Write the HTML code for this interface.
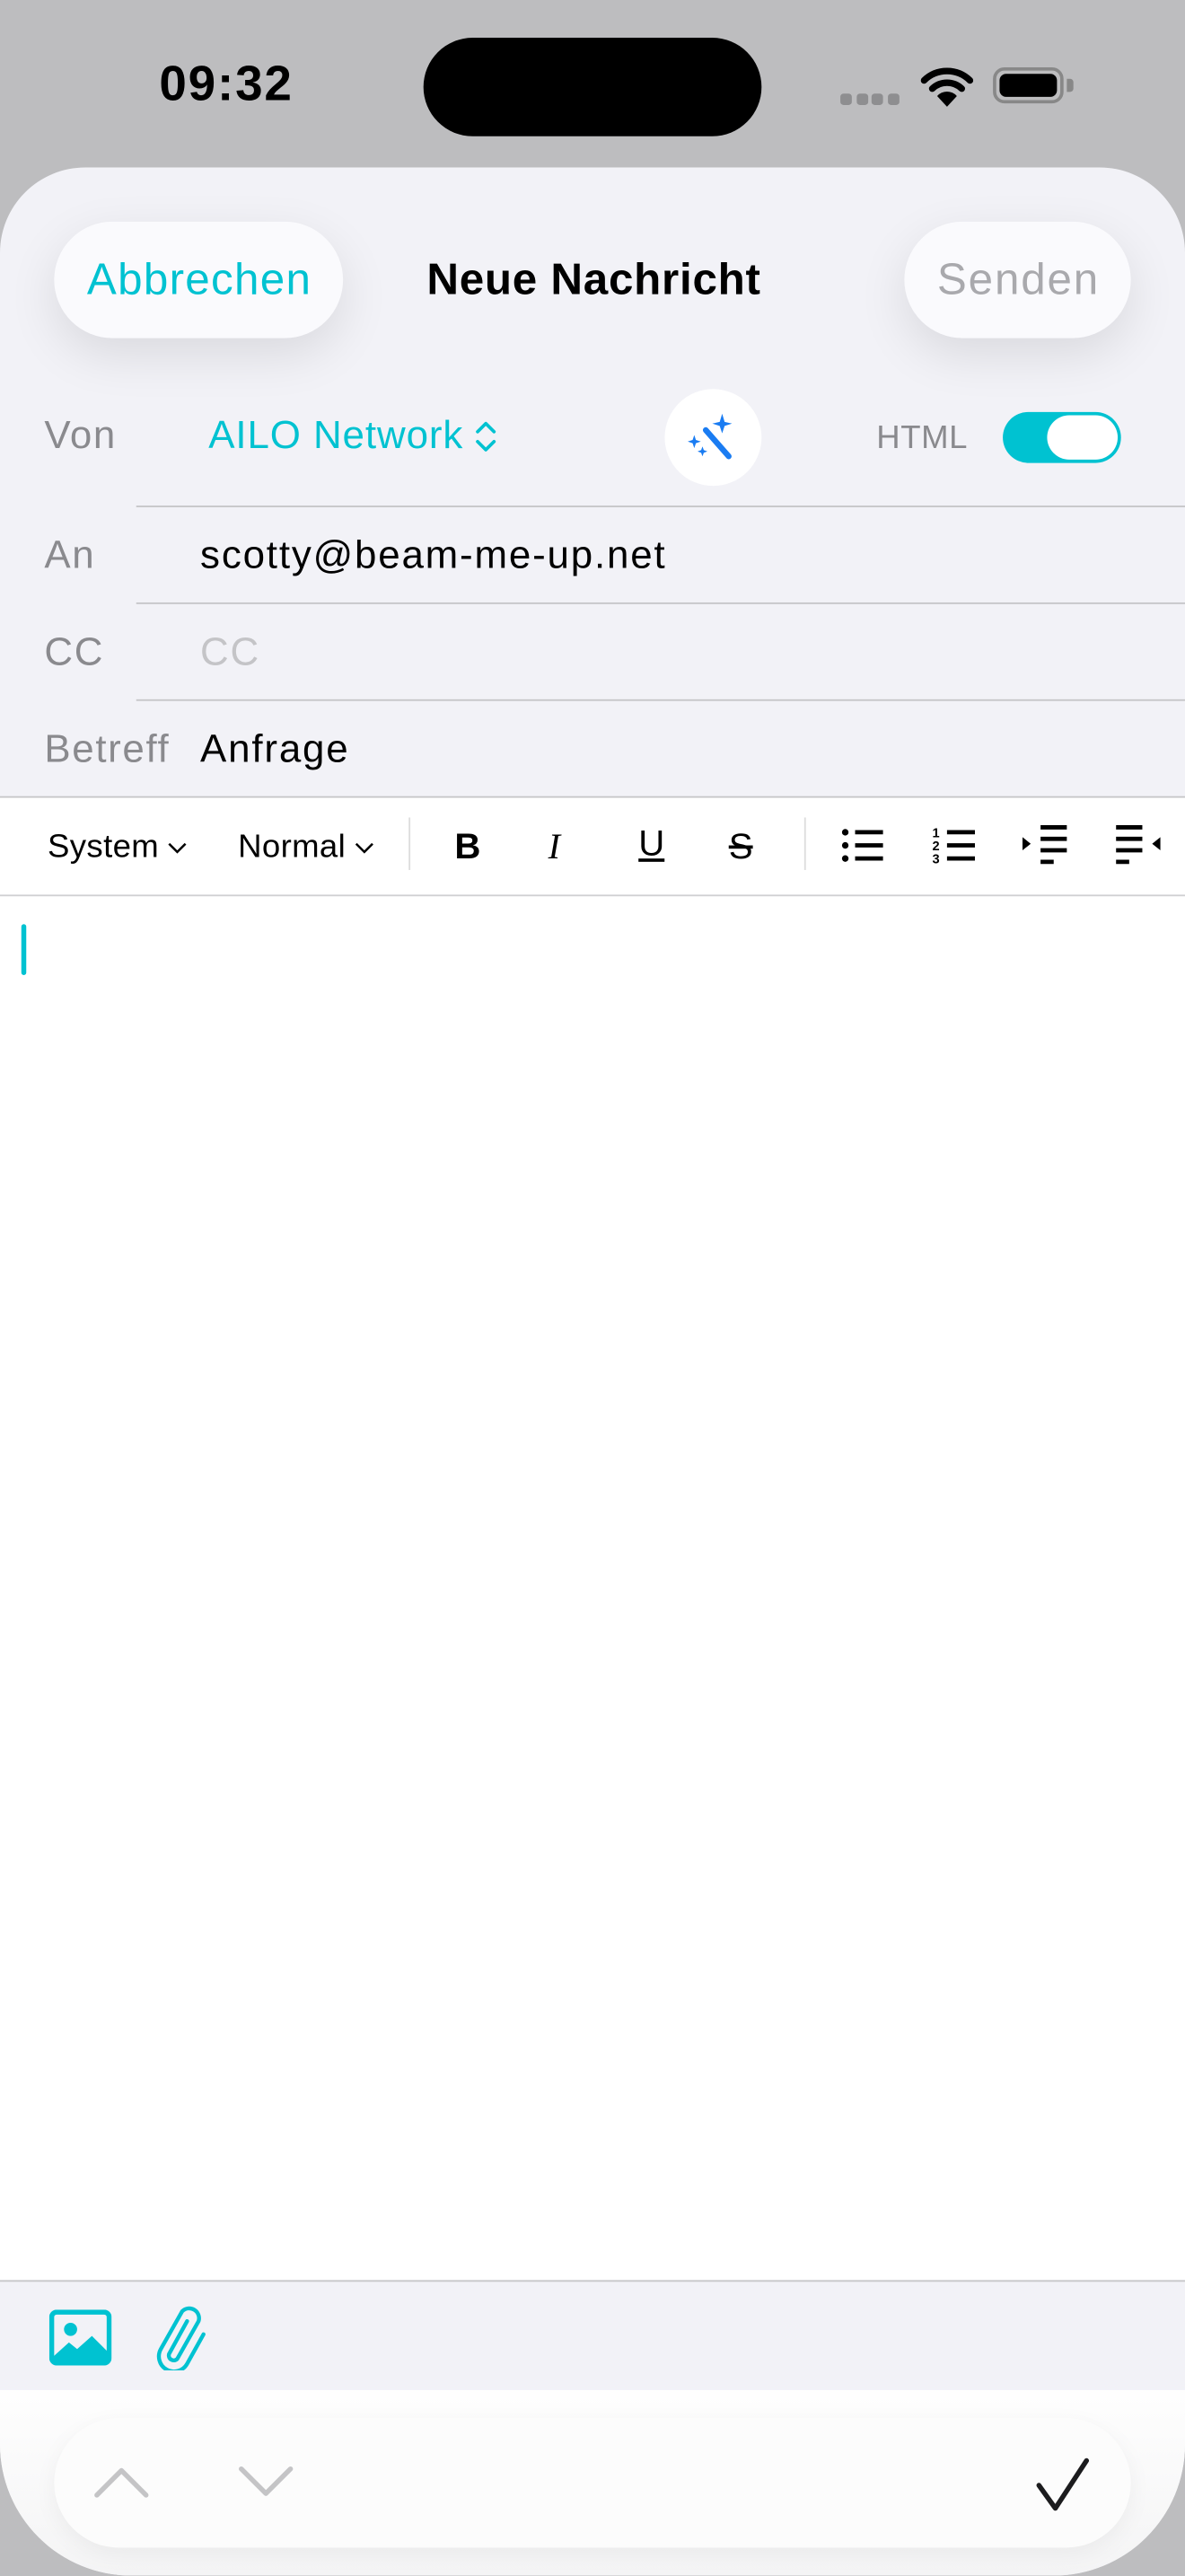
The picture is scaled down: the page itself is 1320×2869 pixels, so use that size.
<!DOCTYPE html>
<html><head><meta charset="utf-8">
<style>
html,body{margin:0;padding:0;width:1320px;height:2868px;overflow:hidden;background:#bdbdbf;}
#w{position:absolute;left:0;top:0;width:722px;height:1569px;transform:scale(1.82825);transform-origin:0 0;font-family:"Liberation Sans",sans-serif;}
.a{position:absolute;}
.t{position:absolute;white-space:nowrap;line-height:1;}
.sheet{left:0;top:102px;width:722px;height:1467px;background:#f2f2f7;border-radius:52px 52px 80px 80px;overflow:hidden;}
.pill{background:#fafafd;border-radius:36px;box-shadow:0 10px 30px rgba(0,0,0,0.10);}
.lab{color:#8a8a8e;font-size:24px;letter-spacing:0.9px;}
.val{font-size:24px;letter-spacing:1px;}
.hd{font-size:27px;letter-spacing:0.7px;}
.sep{height:1px;background:#c6c6c8;}
.tb{font-size:20px;color:#000;letter-spacing:0.2px;}
</style></head><body>
<div id="w">
<div class="t" style="left:97px;top:37px;font-size:30px;font-weight:bold;color:#000;letter-spacing:1px;">09:32</div>
<div class="a" style="left:258px;top:23px;width:206px;height:60px;background:#000;border-radius:30px;"></div>
<div class="a" style="left:512px;top:57px;width:36px;height:7px;">
 <div class="a" style="left:0;top:0;width:7px;height:7px;border-radius:2px;background:#8e8e90"></div>
 <div class="a" style="left:10px;top:0;width:7px;height:7px;border-radius:2px;background:#8e8e90"></div>
 <div class="a" style="left:19px;top:0;width:7px;height:7px;border-radius:2px;background:#8e8e90"></div>
 <div class="a" style="left:29px;top:0;width:7px;height:7px;border-radius:2px;background:#8e8e90"></div>
</div>
<svg class="a" style="left:561px;top:40px" width="32" height="26" viewBox="0 0 32 26">
 <path d="M2 9 A20 20 0 0 1 30 9" stroke="#000" stroke-width="4" fill="none" stroke-linecap="round"/>
 <path d="M7 14 A13 13 0 0 1 25 14" stroke="#000" stroke-width="4" fill="none" stroke-linecap="round"/>
 <path d="M16 25 L10 18.5 A8 8 0 0 1 22 18.5 Z" fill="#000"/>
</svg>
<div class="a" style="left:605px;top:41px;width:43px;height:22px;border:2px solid #888;border-radius:7px;box-sizing:border-box;"></div>
<div class="a" style="left:609px;top:45px;width:35px;height:14px;background:#000;border-radius:4px;"></div>
<div class="a" style="left:650px;top:48px;width:4px;height:8px;background:#888;border-radius:0 2px 2px 0;"></div>

<div class="a sheet">
 <div class="a pill" style="left:33px;top:33px;width:176px;height:71px;"></div>
 <div class="t hd" style="left:53px;top:55px;color:#00c2d1;">Abbrechen</div>
 <div class="t hd" style="left:260px;top:55px;font-weight:bold;color:#000;letter-spacing:0.4px;">Neue Nachricht</div>
 <div class="a pill" style="left:551px;top:33px;width:138px;height:71px;"></div>
 <div class="t hd" style="left:571px;top:55px;color:#a9a9ad;letter-spacing:1px;">Senden</div>

 <div class="t lab" style="left:27px;top:152px;">Von</div>
 <div class="t val" style="left:127px;top:152px;color:#00c2d1;letter-spacing:0.5px;">AILO Network</div>
 <svg class="a" style="left:289px;top:153px" width="14" height="22" viewBox="0 0 14 22"><path d="M2 8 L7 3 L12 8 M2 14 L7 19 L12 14" stroke="#00c2d1" stroke-width="2" fill="none" stroke-linecap="round" stroke-linejoin="round"/></svg>
 <div class="a" style="left:405px;top:135px;width:59px;height:59px;border-radius:50%;background:#fff;"></div>
 <svg class="a" style="left:418px;top:148px" width="32" height="32" viewBox="0 0 32 32">
  <path d="M12 12 L26 28" stroke="#1a7cf2" stroke-width="3.5" stroke-linecap="round"/>
  <path d="M22 2 L23.5 7 L28 8 L23.5 9.5 L22 14 L20.5 9.5 L16 8 L20.5 7 Z" fill="#1a7cf2"/>
  <path d="M5 15 L6 18 L9 19 L6 20 L5 23 L4 20 L1 19 L4 18 Z" fill="#1a7cf2"/>
  <path d="M10 22 L10.8 24.2 L13 25 L10.8 25.8 L10 28 L9.2 25.8 L7 25 L9.2 24.2 Z" fill="#1a7cf2"/>
 </svg>
 <div class="t" style="left:534px;top:155px;font-size:20px;color:#8a8a8e;letter-spacing:0.3px;">HTML</div>
 <div class="a" style="left:611px;top:149px;width:72px;height:31px;border-radius:16px;background:#00c2d1;"></div>
 <div class="a" style="left:638px;top:151px;width:43px;height:27px;border-radius:14px;background:#fff;"></div>

 <div class="a sep" style="left:83px;top:206px;width:639px;"></div>
 <div class="t lab" style="left:27px;top:225px;">An</div>
 <div class="t val" style="left:122px;top:225px;color:#000;">scotty@beam-me-up.net</div>
 <div class="a sep" style="left:83px;top:265px;width:639px;"></div>
 <div class="t lab" style="left:27px;top:284px;">CC</div>
 <div class="t val" style="left:122px;top:284px;color:#c4c4c7;">CC</div>
 <div class="a sep" style="left:83px;top:324px;width:639px;"></div>
 <div class="t lab" style="left:27px;top:343px;">Betreff</div>
 <div class="t val" style="left:122px;top:343px;color:#000;">Anfrage</div>

 <div class="a" style="left:0;top:383px;width:722px;height:904px;background:#fff;"></div>
 <div class="a sep" style="left:0;top:383px;width:722px;"></div>
 <div class="t tb" style="left:29px;top:404px;">System</div>
 <svg class="a" style="left:102px;top:409px" width="12" height="10" viewBox="0 0 12 10"><path d="M1 3 L6 8 L11 3" stroke="#000" stroke-width="1.4" fill="none"/></svg>
 <div class="t tb" style="left:145px;top:404px;">Normal</div>
 <svg class="a" style="left:216px;top:409px" width="12" height="10" viewBox="0 0 12 10"><path d="M1 3 L6 8 L11 3" stroke="#000" stroke-width="1.4" fill="none"/></svg>
 <div class="a" style="left:249px;top:396px;width:1px;height:32px;background:#ddd;"></div>
 <div class="t" style="left:277px;top:403px;font-size:22px;font-weight:bold;color:#000;">B</div>
 <div class="t" style="left:334px;top:403px;font-size:22px;font-style:italic;font-family:'Liberation Serif',serif;color:#000;">I</div>
 <div class="t" style="left:389px;top:401px;font-size:22px;color:#000;text-decoration:underline;">U</div>
 <div class="t" style="left:444px;top:403px;font-size:22px;color:#000;text-decoration:line-through;">S</div>
 <div class="a" style="left:490px;top:396px;width:1px;height:32px;background:#ddd;"></div>
 <svg class="a" style="left:512px;top:402px" width="28" height="22" viewBox="0 0 28 22">
  <circle cx="3" cy="3" r="2" fill="#000"/><circle cx="3" cy="11" r="2" fill="#000"/><circle cx="3" cy="19" r="2" fill="#000"/>
  <path d="M9 3H26M9 11H26M9 19H26" stroke="#000" stroke-width="2.6"/></svg>
 <svg class="a" style="left:568px;top:400px" width="28" height="26" viewBox="0 0 28 26">
  <text x="0" y="8" font-size="8" font-family="Liberation Sans" font-weight="bold">1</text>
  <text x="0" y="16" font-size="8" font-family="Liberation Sans" font-weight="bold">2</text>
  <text x="0" y="24" font-size="8" font-family="Liberation Sans" font-weight="bold">3</text>
  <path d="M9 5H26M9 13H26M9 21H26" stroke="#000" stroke-width="2.6"/></svg>
 <svg class="a" style="left:622px;top:400px" width="30" height="26" viewBox="0 0 30 26">
  <path d="M1 8 L6 12 L1 16 Z" fill="#000"/>
  <path d="M12 2H28M12 9H28M12 16H28M12 23H20" stroke="#000" stroke-width="2.6"/></svg>
 <svg class="a" style="left:678px;top:400px" width="30" height="26" viewBox="0 0 30 26">
  <path d="M29 8 L24 12 L29 16 Z" fill="#000"/>
  <path d="M2 2H18M2 9H18M2 16H18M2 23H10" stroke="#000" stroke-width="2.6"/></svg>
 <div class="a sep" style="left:0;top:443px;width:722px;background:#d0d0d2;"></div>
 <div class="a" style="left:13px;top:461px;width:3px;height:31px;border-radius:2px;background:#00c2d1;"></div>

 <div class="a sep" style="left:0;top:1287px;width:722px;"></div>
 <svg class="a" style="left:30px;top:1305px" width="38" height="34" viewBox="0 0 38 34">
  <rect x="1.5" y="1.5" width="35" height="31" rx="3" fill="none" stroke="#00c2d1" stroke-width="3"/>
  <circle cx="13" cy="12" r="4" fill="#00c2d1"/>
  <path d="M2 29 L12 20 L17 24 L26 16 L36 26 L36 32 L2 32 Z" fill="#00c2d1"/>
 </svg>
 <svg class="a" style="left:94px;top:1302px" width="34" height="40" viewBox="0 0 34 40">
  <path d="M20 10 L9 30 A3 3 0 0 0 14 33 L27 10 A6 6 0 0 0 17 4 L4 27 A9 9 0 0 0 20 36 L30 18" stroke="#00c2d1" stroke-width="2.4" fill="none" stroke-linecap="round"/>
 </svg>

 <div class="a" style="left:0;top:1354px;width:722px;height:113px;background:linear-gradient(#fefefe,#f4f4f5);"></div>
 <div class="a" style="left:33px;top:1371px;width:656px;height:79px;border-radius:40px;background:#fcfcfc;box-shadow:0 4px 14px rgba(0,0,0,0.05);"></div>
 <svg class="a" style="left:56px;top:1399px" width="36" height="22" viewBox="0 0 36 22"><path d="M3 19 L18 4 L33 19" stroke="#c4c4c6" stroke-width="3" fill="none" stroke-linecap="round" stroke-linejoin="round"/></svg>
 <svg class="a" style="left:144px;top:1399px" width="36" height="22" viewBox="0 0 36 22"><path d="M3 3 L18 18 L33 3" stroke="#c4c4c6" stroke-width="3" fill="none" stroke-linecap="round" stroke-linejoin="round"/></svg>
 <svg class="a" style="left:630px;top:1394px" width="36" height="36" viewBox="0 0 36 36"><path d="M3 18 L13 32 L32 3" stroke="#1c1c1e" stroke-width="3" fill="none" stroke-linecap="round" stroke-linejoin="round"/></svg>
</div>
</div>
</body></html>
